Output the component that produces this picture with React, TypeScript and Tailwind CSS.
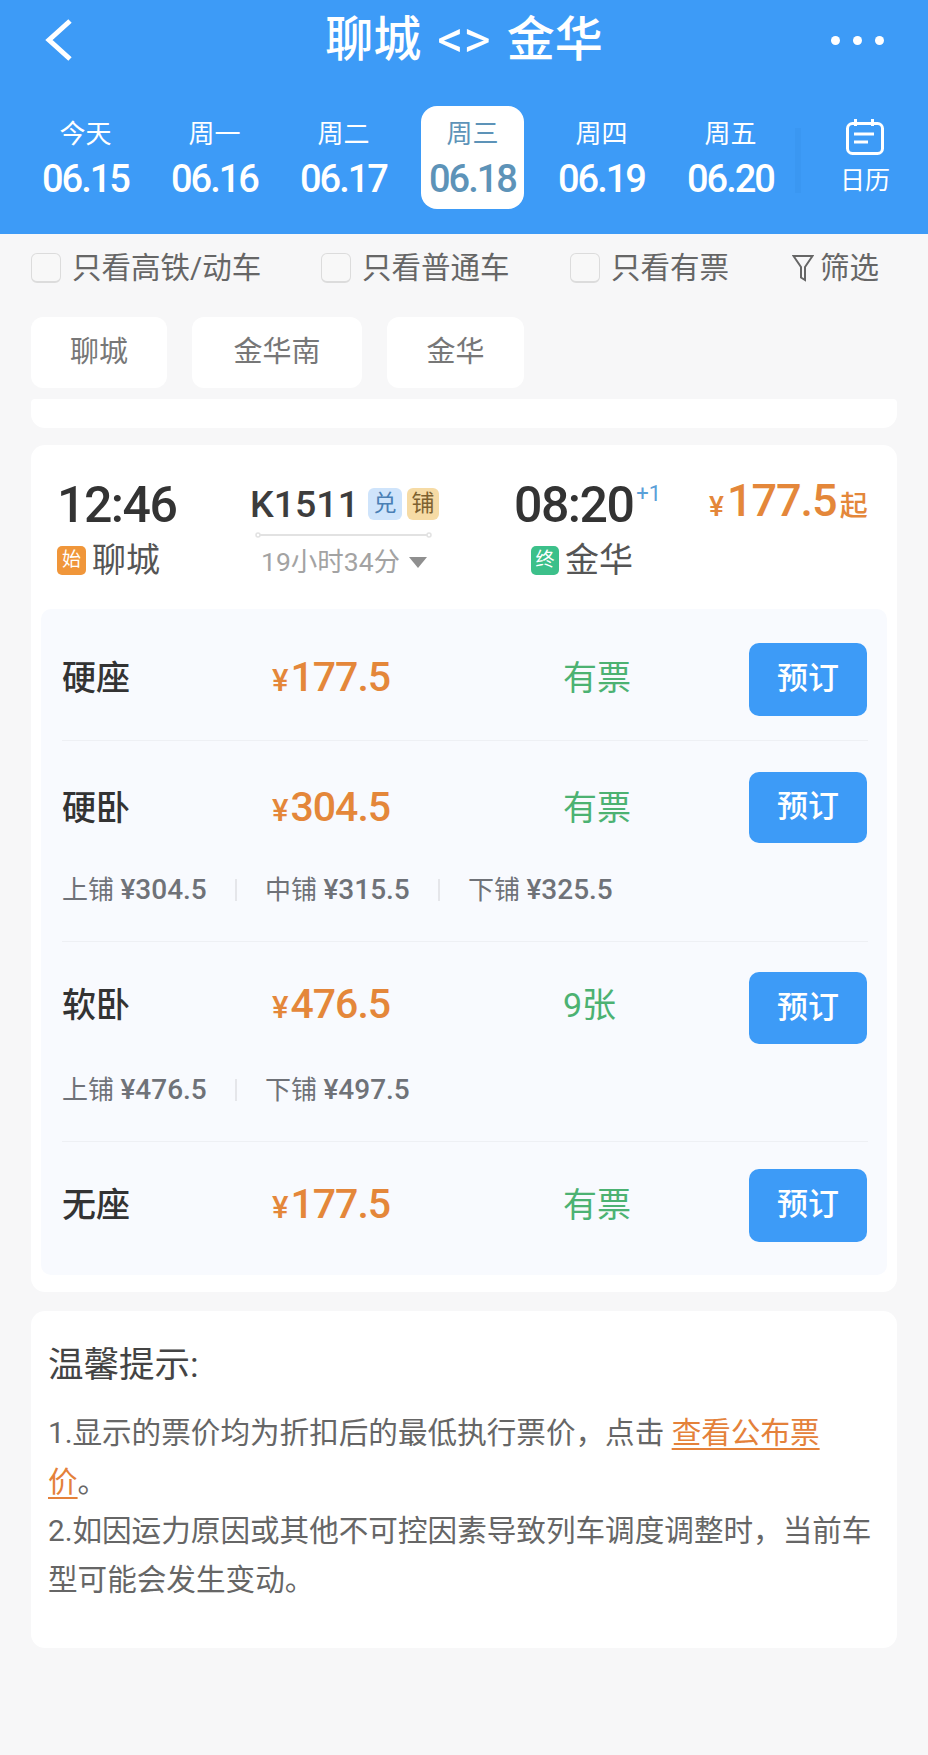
import React from "react";

const sans = { fontFamily: 'Roboto, "Noto Sans CJK SC", sans-serif' };

const days = [
  ["今天", "06.15"],
  ["周一", "06.16"],
  ["周二", "06.17"],
  ["周三", "06.18"],
  ["周四", "06.19"],
  ["周五", "06.20"],
];

type Seat = {
  name: string;
  price: string;
  stock: string;
  rowClass: string;
  btnClass: string;
  textClass: string;
  berthClass?: string;
  berths?: [string, string][];
};

const seats: Seat[] = [
  { name: "硬座", price: "177.5", stock: "有票", rowClass: "pt-[34px] pb-[24px]", btnClass: "h-[73px]", textClass: "pb-[4px]" },
  { name: "硬卧", price: "304.5", stock: "有票", rowClass: "pt-[31px] pb-[36px]", btnClass: "h-[71px]", textClass: "", berthClass: "mt-[32px]", berths: [["上铺", "¥304.5"], ["中铺", "¥315.5"], ["下铺", "¥325.5"]] },
  { name: "软卧", price: "476.5", stock: "9张", rowClass: "pt-[30px] pb-[36px]", btnClass: "h-[72px]", textClass: "pb-[6px]", berthClass: "mt-[31px]", berths: [["上铺", "¥476.5"], ["下铺", "¥497.5"]] },
  { name: "无座", price: "177.5", stock: "有票", rowClass: "pt-[27px] pb-[34px]", btnClass: "h-[73px]", textClass: "pb-[2px]" },
];

function Check({ label, className }: { label: string; className: string }) {
  return (
    <div className={`flex items-center ${className}`}>
      <span className="w-[30px] h-[30px] rounded-[6px] border border-[#dcdcdc] border-b-2 bg-[#f8f8f8] mr-[11px]" />
      <span className="text-[29.500px] leading-[30px] text-[#666666]">{label}</span>
    </div>
  );
}

function StationChip({ label, className }: { label: string; className: string }) {
  return (
    <div className={`h-[71px] bg-white rounded-[12px] flex items-center justify-center text-[29px] text-[#777777] ${className}`}>
      {label}
    </div>
  );
}

function SeatRow({ seat, last }: { seat: Seat; last: boolean }) {
  return (
    <div className={`${seat.rowClass} ${last ? "" : "border-b border-[#eef0f4]"} mx-[21px] mr-[19px]`}>
      <div className="flex items-center">
        <div className={`flex items-center ${seat.textClass}`}>
          <div className="w-[210px] text-[34px] leading-[40px] font-medium text-[#333333]">{seat.name}</div>
          <div className="w-[291px] mt-[4px] flex items-baseline text-[#e4873a] font-medium">
            <span className="text-[31px] mr-[2px]">¥</span>
            <span className="text-[41px] leading-[44px] tracking-[-1px]">{seat.price}</span>
          </div>
          <div className="w-[186px] text-[34px] leading-[40px] text-[#4cb272]">{seat.stock}</div>
        </div>
        <div className={`w-[118px] ${seat.btnClass} rounded-[10px] bg-[#3d9bf7] text-white text-[31px] font-medium flex items-center justify-center`}>
          预订
        </div>
      </div>
      {seat.berths && (
        <div className={`flex items-center h-[30px] text-[#6f7278] ${seat.berthClass}`}>
          {seat.berths.map(([berth, fare], i) => (
            <React.Fragment key={berth}>
              {i > 0 && <span className="w-[2px] h-[22px] bg-[#e5e6ea] mx-[28px]" />}
              <span className="w-[145px] whitespace-nowrap text-[26px]">
                {berth} <span className="text-[28px] font-medium">{fare}</span>
              </span>
            </React.Fragment>
          ))}
        </div>
      )}
    </div>
  );
}

export default function App() {
  return (
    <div className="w-[928px] h-[1755px] bg-[#f7f7f8] overflow-hidden" style={sans}>
      {/* Route header and date strip */}
      <header className="h-[234px] bg-[#3d9bf7] text-white">
        <div className="h-[80px] flex items-center justify-between px-[44px]">
          <div className="w-[60px]">
            <svg width="30" height="42" viewBox="0 0 30 42" fill="none" stroke="#fff" strokeWidth="5">
              <path d="M26 2 L5 21 L26 40" />
            </svg>
          </div>
          <div className="text-[48px] leading-[60px] font-medium whitespace-nowrap flex items-center gap-[16px]">
            <span>聊城</span>
            <span className="font-normal text-[52px]">&lt;&gt;</span>
            <span>金华</span>
          </div>
          <div className="w-[60px] flex justify-end gap-[13px]">
            <span className="w-[9px] h-[9px] rounded-full bg-white" />
            <span className="w-[9px] h-[9px] rounded-full bg-white" />
            <span className="w-[9px] h-[9px] rounded-full bg-white" />
          </div>
        </div>
        <div className="flex mt-[26px] pl-[21px] h-[103px]">
          {days.map(([d, n], i) => (
            <div key={n} className="w-[129px] flex justify-center">
              <div className={`w-[103px] h-[103px] rounded-[16px] flex flex-col items-center pt-[11px] ${i === 3 ? "bg-white text-[#5d93b8]" : ""}`}>
                <span className="text-[26px] leading-[34px] whitespace-nowrap">{d}</span>
                <span className="text-[38px] leading-[42px] mt-[7px] font-medium tracking-[-2px] whitespace-nowrap">{n}</span>
              </div>
            </div>
          ))}
          <span className="self-center w-[6px] h-[65px] bg-[#3a97f2] mt-[6px]" />
          <div className="ml-[39px] flex flex-col items-center">
            <svg className="mt-[12px]" width="40" height="38" viewBox="0 0 40 38" fill="none" stroke="#fff" strokeWidth="3">
              <rect x="2.500" y="5.500" width="35" height="30" rx="5" />
              <path d="M10.500 1v7M27.500 1v7M9 16h20M9 24h14" />
            </svg>
            <span className="text-[25px] leading-[30px] mt-[10px] whitespace-nowrap">日历</span>
          </div>
        </div>
      </header>

      {/* Filter row */}
      <div className="flex items-center h-[41px] mt-[13px] pl-[31px]">
        <Check label="只看高铁/动车" className="w-[290px]" />
        <Check label="只看普通车" className="w-[249px]" />
        <Check label="只看有票" className="w-[222px]" />
        <svg className="mt-[1px] mr-[6px]" width="22" height="28" viewBox="0 0 22 28" fill="none" stroke="#666" strokeWidth="2">
          <path d="M1.500 2h19l-7.500 11v13l-4-2.500V13z" />
        </svg>
        <span className="text-[29.500px] leading-[30px] text-[#666666]">筛选</span>
      </div>

      {/* Station chips */}
      <div className="flex mt-[29px] pl-[31px]">
        <StationChip label="聊城" className="w-[136px] mr-[25px]" />
        <StationChip label="金华南" className="w-[170px] mr-[25px]" />
        <StationChip label="金华" className="w-[137px]" />
      </div>

      {/* Tail of the previous train's card */}
      <div className="h-[29px] mt-[11px] mx-[31px] bg-white rounded-b-[14px] rounded-t-[4px]" />

      {/* Train card */}
      <div className="mt-[17px] mx-[31px] h-[847px] bg-white rounded-[14px] pt-[32px]">
        <div className="h-[132px] flex">
          <div className="w-[206px] pl-[26px]">
            <div className="text-[50px] leading-[56px] font-medium tracking-[-1.500px] text-[#333333]">12:46</div>
            <div className="flex items-center mt-[7px] h-[40px]">
              <span className="w-[29px] h-[29px] rounded-[5px] bg-[#f0963a] text-white text-[19px] flex items-center justify-center">始</span>
              <span className="ml-[6px] text-[34px] text-[#555555]">聊城</span>
            </div>
          </div>
          <div className="w-[277px] pl-[13px]">
            <div className="flex items-center h-[36px] mt-[9px]">
              <span className="text-[37.500px] font-medium text-[#3d3d3d] leading-[36px] mr-[9px]">K1511</span>
              <span className="w-[34px] h-[32px] rounded-[6px] bg-[#cfe4fb] text-[#4a7fb5] text-[23px] flex items-center justify-center">兑</span>
              <span className="ml-[5px] w-[32px] h-[32px] rounded-[6px] bg-[#f6dba5] text-[#7d6130] text-[23px] flex items-center justify-center">铺</span>
            </div>
            <svg className="block mt-[10px] ml-[5px]" width="177" height="6" viewBox="0 0 177 6" fill="#fff" stroke="#e2e2e2" strokeWidth="1.500">
              <path d="M3 3h171" strokeWidth="2" />
              <circle cx="3" cy="3" r="2" />
              <circle cx="174" cy="3" r="2" />
            </svg>
            <div className="flex items-center mt-[9px] ml-[11px] text-[26.500px] leading-[30px] text-[#a3a3a3] whitespace-nowrap">
              19小时34分
              <svg className="ml-[9px]" width="18" height="11" viewBox="0 0 18 11" fill="#8f8f8f">
                <path d="M0 0h18L9 11z" />
              </svg>
            </div>
          </div>
          <div className="w-[195px]">
            <div className="flex items-start">
              <span className="text-[50px] leading-[56px] font-medium tracking-[-1.500px] text-[#333333]">08:20</span>
              <span className="text-[22px] leading-[22px] text-[#5aa0d8] ml-[3px] mt-[6px]">+1</span>
            </div>
            <div className="flex items-center mt-[7px] ml-[17px] h-[40px]">
              <span className="w-[28px] h-[29px] rounded-[5px] bg-[#3cc08a] text-white text-[19px] flex items-center justify-center">终</span>
              <span className="ml-[6px] text-[34px] text-[#555555]">金华</span>
            </div>
          </div>
          <div className="flex items-baseline h-[50px] text-[#e4873a] font-medium whitespace-nowrap -mt-[1px]">
            <span className="text-[28px]">¥</span>
            <span className="text-[45px] leading-[50px] ml-[3px] tracking-[-1px]">177.5</span>
            <span className="text-[28px] ml-[3px]">起</span>
          </div>
        </div>

        {/* Seat classes */}
        <div className="mx-[10px] h-[666px] bg-[#f8fafe] rounded-[10px]">
          {seats.map((s, i) => (
            <SeatRow key={s.name} seat={s} last={i === seats.length - 1} />
          ))}
        </div>
      </div>

      {/* Notes */}
      <div className="mt-[19px] mx-[31px] h-[337px] bg-white rounded-[14px] px-[17px] pt-[31px]">
        <div className="text-[35.500px] leading-[46px] text-[#444444]">温馨提示:</div>
        <div className="mt-[21px] w-[832px] text-[29.600px] leading-[49px] text-[#666666]">
          <p>
            1.显示的票价均为折扣后的最低执行票价，点击{" "}
            <span className="text-[#e4813a] underline underline-offset-[5px] decoration-2">查看公布票</span>
            <br />
            <span className="text-[#e4813a] underline underline-offset-[5px] decoration-2">价</span>。
          </p>
          <p>2.如因运力原因或其他不可控因素导致列车调度调整时，当前车型可能会发生变动。</p>
        </div>
      </div>
    </div>
  );
}
